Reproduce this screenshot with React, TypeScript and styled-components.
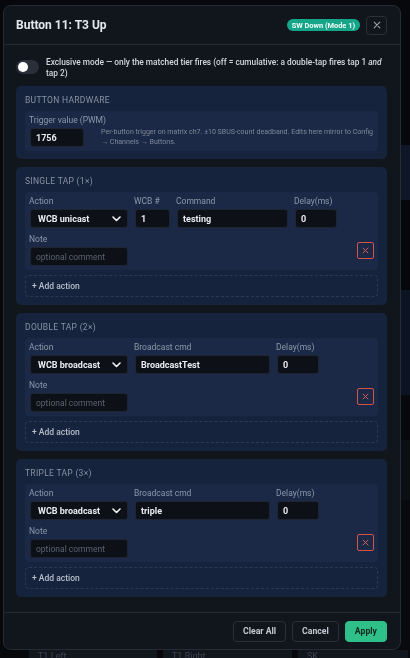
import React from "react";
import styled, { createGlobalStyle } from "styled-components";

const GlobalStyle = createGlobalStyle`
  html, body {
    margin: 0;
    padding: 0;
    background: #06080b;
    font-family: Roboto, "Liberation Sans", sans-serif;
    overflow: hidden;
  }
  * { box-sizing: border-box; }
`;

/* ---------- dimmed page behind the dialog ---------- */

const BgPage = styled.div`
  width: 410px;
  height: 658px;
  display: grid;
  grid-template-columns: 1fr 12px;
  background: #06080b;
`;

const BgMain = styled.div``;

const BgSide = styled.div`
  display: flex;
  flex-direction: column;
`;

const BgBlock = styled.div<{ $h: number; $c: string }>`
  height: ${({ $h }) => $h}px;
  background: ${({ $c }) => $c};
`;

const BgCards = styled.div`
  position: fixed;
  left: 29px;
  top: 650px;
  display: flex;
  gap: 6px;
`;

const BgCard = styled.div<{ $w: number }>`
  width: ${({ $w }) => $w}px;
  height: 20px;
  background: #12161d;
  color: #3d4452;
  font-size: 9px;
  padding: 1px 9px;
`;

/* ---------- dialog ---------- */

const Modal = styled.div`
  position: fixed;
  left: 3px;
  top: 5px;
  width: 398px;
  height: 645px;
  background: #11151c;
  border: 1px solid #262c37;
  border-radius: 8px;
  display: flex;
  flex-direction: column;
  overflow: hidden;
`;

const Header = styled.div`
  height: 39px;
  flex-shrink: 0;
  display: flex;
  align-items: center;
  justify-content: space-between;
  padding: 0 13px 0 12px;
  border-bottom: 1px solid #262c37;
`;

const Title = styled.h2`
  margin: 0;
  font-size: 12px;
  font-weight: 700;
  color: #e4e7ec;
`;

const HeaderRight = styled.div`
  display: flex;
  align-items: center;
  gap: 6px;
`;

const Badge = styled.span`
  height: 12px;
  padding: 0 5px;
  border-radius: 6px;
  background: #17a58a;
  color: #f2fffb;
  font-size: 7.4px;
  font-weight: 700;
  display: flex;
  align-items: center;
`;

const CloseButton = styled.button`
  width: 21px;
  height: 19px;
  padding: 0;
  border: 1px solid #2a303c;
  border-radius: 4px;
  background: transparent;
  color: #9aa2ae;
  display: flex;
  align-items: center;
  justify-content: center;
`;

const Body = styled.div`
  flex: 1;
  overflow: hidden;
  padding: 12px 13px 0 12px;
  display: flex;
  flex-direction: column;
  gap: 8px;
`;

const ToggleRow = styled.div`
  display: flex;
  align-items: flex-start;
  gap: 7px;
`;

const Switch = styled.span`
  flex-shrink: 0;
  width: 23px;
  height: 14px;
  margin-top: 3px;
  border-radius: 7px;
  background: #2a2f39;
  position: relative;

  &::after {
    content: "";
    position: absolute;
    left: 2px;
    top: 2px;
    width: 10px;
    height: 10px;
    border-radius: 50%;
    background: #ffffff;
  }
`;

const ToggleText = styled.p`
  margin: 0;
  font-size: 8.3px;
  line-height: 10.5px;
  font-weight: 500;
  color: #d3d7de;
`;

const Section = styled.section`
  flex-shrink: 0;
  background: #16233c;
  border-radius: 5px;
  padding: 9px 9px 8px;
  display: flex;
  flex-direction: column;
  gap: 5px;
`;

const SectionTitle = styled.h3`
  margin: 0 0 1px;
  font-size: 8.5px;
  line-height: 10px;
  font-weight: 400;
  letter-spacing: 0.3px;
  text-transform: uppercase;
  color: #8993a4;
`;

const InnerBox = styled.div`
  background: #1b2946;
  border-radius: 4px;
  padding: 4px 4px 4px 5px;
`;

const HardwareRow = styled.div`
  display: flex;
  align-items: flex-end;
  gap: 17px;
`;

const HelpText = styled.p`
  margin: 0;
  font-size: 7.05px;
  line-height: 10px;
  color: #7f8899;
`;

const Field = styled.div<{ $w: number }>`
  flex-shrink: 0;
  width: ${({ $w }) => $w}px;
  display: flex;
  flex-direction: column;
  gap: 3px;
`;

const Label = styled.span`
  font-size: 8.5px;
  line-height: 10px;
  color: #8e98a9;
  margin-left: -1px;
  white-space: nowrap;
`;

const Input = styled.div<{ $placeholder?: boolean }>`
  height: 19px;
  background: #0d1016;
  border: 1px solid #1f2530;
  border-radius: 3px;
  padding: 0 5px;
  display: flex;
  align-items: center;
  justify-content: space-between;
  font-size: ${({ $placeholder }) => ($placeholder ? "8.5px" : "9px")};
  font-weight: ${({ $placeholder }) => ($placeholder ? 400 : 700)};
  color: ${({ $placeholder }) => ($placeholder ? "#5b6270" : "#e9ecf0")};
  white-space: nowrap;
`;

const SelectInput = styled(Input)`
  padding: 0 6px 0 7px;
`;

const ActionRow = styled(InnerBox)`
  display: flex;
  justify-content: space-between;
`;

const ActionFields = styled.div`
  display: flex;
  flex-direction: column;
  gap: 6px;
`;

const FieldLine = styled.div`
  display: flex;
  gap: 7px;
`;

const DeleteButton = styled.button`
  align-self: flex-end;
  margin: 0 0 7px 0;
  width: 17px;
  height: 17px;
  padding: 0;
  background: transparent;
  border: 1px solid #d2524c;
  border-radius: 2px;
  color: #e0625a;
  display: flex;
  align-items: center;
  justify-content: center;
`;

const AddAction = styled.button`
  height: 22px;
  width: 100%;
  background: transparent;
  border: 1px dashed #2c3a55;
  border-radius: 4px;
  text-align: left;
  padding: 0 6px;
  font-family: inherit;
  font-size: 8.5px;
  font-weight: 500;
  color: #b7bfcb;
`;

const Footer = styled.div`
  height: 37px;
  flex-shrink: 0;
  border-top: 1px solid #262c37;
  display: flex;
  align-items: center;
  justify-content: flex-end;
  gap: 6px;
  padding: 0 13px;
`;

const FooterButton = styled.button<{ $primary?: boolean }>`
  height: 21px;
  padding: 0 9px;
  border-radius: 4px;
  font-family: inherit;
  font-size: 8.7px;
  font-weight: 700;
  border: 1px solid ${({ $primary }) => ($primary ? "#2fbf88" : "#2b313c")};
  background: ${({ $primary }) => ($primary ? "#2fbf88" : "transparent")};
  color: ${({ $primary }) => ($primary ? "#0f2a20" : "#c3c9d2")};
`;

/* ---------- icons ---------- */

const XIcon = ({ size, stroke }: { size: number; stroke: number }) => (
  <svg width={size} height={size} viewBox="0 0 10 10" fill="none">
    <path d="M1.5 1.5 L8.5 8.5 M8.5 1.5 L1.5 8.5" stroke="currentColor" strokeWidth={stroke} strokeLinecap="round" />
  </svg>
);

const Chevron = () => (
  <svg width="9" height="6" viewBox="0 0 9 6" fill="none">
    <path d="M1 1 L4.5 4.5 L8 1" stroke="#f2f4f7" strokeWidth="1.6" strokeLinecap="round" strokeLinejoin="round" />
  </svg>
);

/* ---------- data ---------- */

type Col = { label: string; value: string; width: number; select?: boolean };

type Tier = { title: string; cols: Col[] };

const tiers: Tier[] = [
  {
    title: "Single tap (1×)",
    cols: [
      { label: "Action", value: "WCB unicast", width: 98, select: true },
      { label: "WCB #", value: "1", width: 35 },
      { label: "Command", value: "testing", width: 111 },
      { label: "Delay(ms)", value: "0", width: 42 },
    ],
  },
  {
    title: "Double tap (2×)",
    cols: [
      { label: "Action", value: "WCB broadcast", width: 98, select: true },
      { label: "Broadcast cmd", value: "BroadcastTest", width: 135 },
      { label: "Delay(ms)", value: "0", width: 42 },
    ],
  },
  {
    title: "Triple tap (3×)",
    cols: [
      { label: "Action", value: "WCB broadcast", width: 98, select: true },
      { label: "Broadcast cmd", value: "triple", width: 135 },
      { label: "Delay(ms)", value: "0", width: 42 },
    ],
  },
];

const TierSection = ({ tier }: { tier: Tier }) => (
  <Section>
    <SectionTitle>{tier.title}</SectionTitle>
    <ActionRow>
      <ActionFields>
        <FieldLine>
          {tier.cols.map((c) => (
            <Field key={c.label} $w={c.width}>
              <Label>{c.label}</Label>
              {c.select ? (
                <SelectInput>
                  {c.value}
                  <Chevron />
                </SelectInput>
              ) : (
                <Input>{c.value}</Input>
              )}
            </Field>
          ))}
        </FieldLine>
        <Field $w={98}>
          <Label>Note</Label>
          <Input $placeholder>optional comment</Input>
        </Field>
      </ActionFields>
      <DeleteButton>
        <XIcon size={7} stroke={1.3} />
      </DeleteButton>
    </ActionRow>
    <AddAction>+ Add action</AddAction>
  </Section>
);

export default function App() {
  return (
    <>
      <GlobalStyle />
      <BgPage>
        <BgMain />
        <BgSide>
          <BgBlock $h={145} $c="#06080b" />
          <BgBlock $h={55} $c="#0e1628" />
          <BgBlock $h={90} $c="#05070a" />
          <BgBlock $h={105} $c="#0c1322" />
          <BgBlock $h={45} $c="#06080b" />
          <BgBlock $h={60} $c="#0b0e13" />
          <BgBlock $h={158} $c="#080a0e" />
        </BgSide>
      </BgPage>
      <BgCards>
        <BgCard $w={128}>T1 Left</BgCard>
        <BgCard $w={129}>T1 Right</BgCard>
        <BgCard $w={110}>SK</BgCard>
      </BgCards>

      <Modal>
        <Header>
          <Title>Button 11: T3 Up</Title>
          <HeaderRight>
            <Badge>SW Down (Mode 1)</Badge>
            <CloseButton>
              <XIcon size={8} stroke={1.4} />
            </CloseButton>
          </HeaderRight>
        </Header>

        <Body>
          <ToggleRow>
            <Switch />
            <ToggleText>
              Exclusive mode — only the matched tier fires (off = cumulative: a double-tap fires tap 1 <em>and</em> tap 2)
            </ToggleText>
          </ToggleRow>

          <Section>
            <SectionTitle>Button hardware</SectionTitle>
            <InnerBox>
              <HardwareRow>
                <Field $w={54}>
                  <Label>Trigger value (PWM)</Label>
                  <Input>1756</Input>
                </Field>
                <HelpText>
                  Per-button trigger on matrix ch7. ±10 SBUS-count deadband. Edits here mirror to Config → Channels → Buttons.
                </HelpText>
              </HardwareRow>
            </InnerBox>
          </Section>

          {tiers.map((t) => (
            <TierSection key={t.title} tier={t} />
          ))}
        </Body>

        <Footer>
          <FooterButton>Clear All</FooterButton>
          <FooterButton>Cancel</FooterButton>
          <FooterButton $primary>Apply</FooterButton>
        </Footer>
      </Modal>
    </>
  );
}
